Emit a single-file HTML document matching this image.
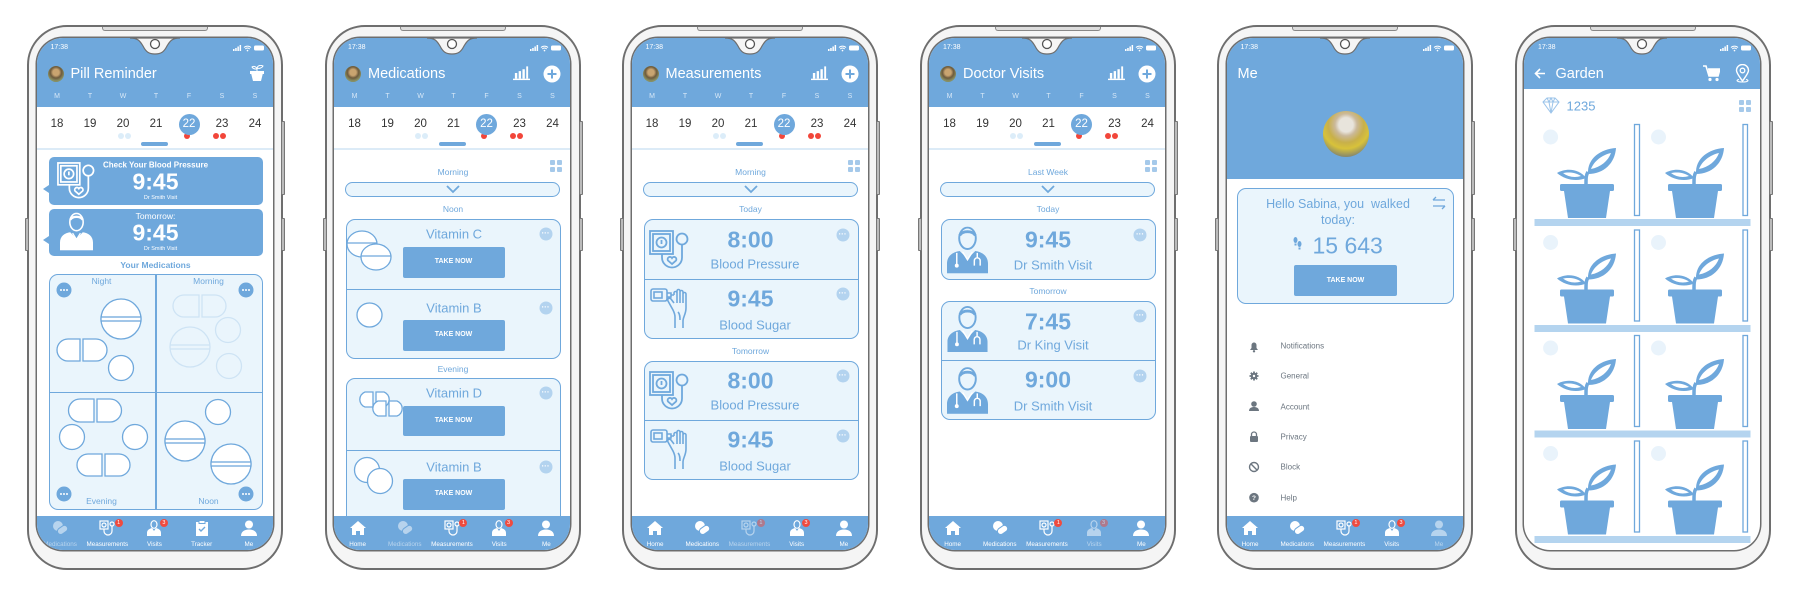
<!DOCTYPE html>
<html><head><meta charset="utf-8">
<style>
*{margin:0;padding:0;box-sizing:border-box}
body{width:1800px;height:599px;background:#fff;position:relative;overflow:hidden;font-family:"Liberation Sans",sans-serif}
.ph{position:absolute;top:25px;width:256px;height:545px}
.fr{position:absolute;left:0;top:0;width:256px;height:545px;border:2px solid #6e6e6e;border-radius:40px;background:#f5f5f5}
.spk{position:absolute;left:75px;top:2px;width:106px;height:4px;border:1px solid #888;border-top:none;border-radius:0 0 3px 3px;background:#ddd}
.sb{position:absolute;width:4px;background:#bbb;border:1px solid #777;border-radius:1px}
.sc{position:absolute;left:9.5px;top:13px;width:236px;height:512px;border-radius:26px;overflow:hidden;background:#fff;box-shadow:0 0 0 1.5px #6e6e6e}
.hd{position:absolute;left:0;top:0;width:236px;height:69px;background:#6fa8dc}
.a{position:absolute;white-space:nowrap}
.c{position:absolute;white-space:nowrap;transform:translate(-50%,-50%)}
.l{position:absolute;white-space:nowrap;transform:translateY(-50%)}
.st{left:14px;top:6px;font-size:7px;color:#fff}
.ttl{left:34px;top:35.5px;font-size:14.5px;color:#fff}
.av{position:absolute;left:11px;top:27.5px;width:16px;height:16px;border-radius:50%;background:radial-gradient(circle at 50% 40%,#c9a470 0 25%,#6d5a3c 45%,#8b9466 70%,#556040)}
.row{position:absolute;left:4px;width:231px;display:flex}
.row span{width:33px;text-align:center;display:block}
.wk{top:55px;font-size:7px;color:#d6e7f7}
.dn{top:79px;font-size:11.5px;color:#333;line-height:14px}
.sel{position:relative;color:#fff}
.sel:before{content:"";position:absolute;left:50%;top:50%;width:21px;height:21px;margin:-10.5px 0 0 -10.5px;border-radius:50%;background:#6fa8dc;z-index:-1}
.dr{position:absolute;left:0;top:69px;width:236px;height:42px;z-index:1}
.dt{position:absolute;top:95px;width:6px;height:6px;border-radius:50%}
.ind{position:absolute;left:104.5px;top:104px;width:27px;height:4px;border-radius:2px;background:#6fa8dc}
.sep{position:absolute;left:0;top:110px;width:236px;height:2px;background:#dcebf7}
.nav{position:absolute;left:0;top:478px;width:236px;height:34px;background:#6fa8dc;display:flex}
.nav div{width:47.2px;position:relative;color:#fff}
.nav svg{position:absolute;left:50%;top:4px;transform:translateX(-50%)}
.nav b{position:absolute;left:0;width:100%;text-align:center;top:25px;font-size:6.3px;font-weight:normal;white-space:nowrap}
.nav .f{opacity:.5}
.bd{position:absolute;top:3px;width:8px;height:8px;border-radius:50%;background:#ef4b3f;color:#fff;font-size:5.5px;text-align:center;line-height:8px}
.grp{position:absolute;left:12px;width:215px;border:1.5px solid #6fa8dc;border-radius:9px;background:#eaf5fc}
.dv{position:absolute;left:0;width:100%;height:1.5px;background:#6fa8dc}
.btn{position:absolute;left:68.5px;width:102px;height:30.5px;background:#6fa8dc;border-radius:2px;color:#fff;font-size:7px;font-weight:bold;text-align:center;line-height:30.5px}
.more{position:absolute;width:13px;height:13px;border-radius:50%;background:#b3d3ef;transform:translate(-50%,-50%)}
.more:after{content:"···";position:absolute;left:0;width:100%;top:0;text-align:center;color:#fff;font-size:8px;line-height:11px;font-weight:bold}
.drop{position:absolute;left:11px;top:144px;width:215px;height:15px;border:1.5px solid #6fa8dc;border-radius:8px;background:#eaf5fc}
.sm{font-size:8.5px;color:#6fa8dc}
.big{font-size:23px;font-weight:bold;color:#6fa8dc}
.med{font-size:13px;color:#6fa8dc}
.vit{font-size:13px;color:#6fa8dc}
.gi{position:absolute;width:12px;height:12px}
.gi i{position:absolute;width:5px;height:5px;border-radius:1px;background:#a5c9ea}
.menu{font-size:8px;color:#6c7680}
</style></head><body>
<svg width="0" height="0" style="position:absolute">
<defs>
<symbol id="stat" viewBox="0 0 32 8"><g fill="#fff"><rect x="0" y="5" width="1.5" height="2"/><rect x="2.2" y="4" width="1.5" height="3"/><rect x="4.4" y="2.5" width="1.5" height="4.5"/><rect x="6.6" y="1" width="1.5" height="6"/></g><path d="M11 3.5a5 5 0 0 1 7 0M12.3 5a3 3 0 0 1 4.4 0" stroke="#fff" stroke-width="1" fill="none"/><circle cx="14.5" cy="6.6" r=".8" fill="#fff"/><rect x="21" y="1.5" width="10" height="5" rx="1.5" fill="#fff"/></symbol>
<symbol id="chart" viewBox="0 0 18 16"><g fill="#fff"><rect x="2" y="8" width="2.5" height="6"/><rect x="6" y="6" width="2.5" height="8"/><rect x="10" y="4" width="2.5" height="10"/><rect x="14" y="1" width="2" height="13"/><rect x="0" y="14" width="18" height="1.5"/></g></symbol>
<symbol id="plus" viewBox="0 0 18 18"><circle cx="9" cy="9" r="8.5" fill="#fff"/><path d="M9 4.5v9M4.5 9h9" stroke="#6fa8dc" stroke-width="2"/></symbol>
<symbol id="bp" viewBox="0 0 40 42"><g fill="none" stroke="currentColor" stroke-width="1.8"><rect x="1" y="2" width="23" height="23"/><rect x="4" y="5" width="17" height="17"/><circle cx="12.5" cy="13.5" r="5"/><path d="M12.5 11v4"/><circle cx="33" cy="10" r="5.5"/><path d="M33 15.5v13c0 6-5 10-10 10s-10-4-10-10v-3.5"/><path d="M23 35l-4-3.5a2.3 2.3 0 0 1 4-2.5a2.3 2.3 0 0 1 4 2.5z"/></g></symbol>
<symbol id="sugar" viewBox="0 0 42 42"><g fill="none" stroke="currentColor" stroke-width="1.6"><rect x="1" y="2" width="16" height="12" rx="2"/><rect x="4" y="5" width="8" height="6"/><path d="M17 6h4v4h-4M21 8h3"/><path d="M24 8v-2a1.5 1.5 0 0 1 3 0v10M27 6v-2a1.5 1.5 0 0 1 3 0v12M30 5a1.5 1.5 0 0 1 3 0v11M33 7a1.5 1.5 0 0 1 3 0v14c0 6-3 9-3 13v7M24 16l-3-4c-2-2-4 0-3 2l5 9c1 2 2 4 2 7v11"/><path d="M28 25c2 2 2 5 2 8"/></g></symbol>
<symbol id="doc" viewBox="0 0 42 48"><ellipse cx="21" cy="12" rx="8.5" ry="11" fill="none" stroke="currentColor" stroke-width="2"/><path d="M13 9c3-5 13-5 16 0" stroke="currentColor" stroke-width="3" fill="none"/><path d="M0 48v-10c0-8 6-12 13-13l8 8 8-8c7 1 13 5 13 13v10z" fill="currentColor"/><path d="M16 26l5 8 5-8" stroke="#fff" stroke-width="1.5" fill="none"/><path d="M10 27v12" stroke="#fff" stroke-width="1.5"/><circle cx="10" cy="40" r="2" fill="#fff"/><path d="M31 27v5m-3 8v-5a3 3 0 0 1 6 0v5" stroke="#fff" stroke-width="1.5" fill="none"/></symbol>
<symbol id="plant" viewBox="0 0 60 72"><rect x="3" y="37" width="54" height="7" rx="1.5" fill="#6fa8dc"/><path d="M7 44h46l-4 27H11z" fill="#6fa8dc"/><path d="M29 37c0-6 0-9 2-12" stroke="#6fa8dc" stroke-width="3.5" fill="none"/><path d="M31 27C30 11 44 2 59 1C58 16 47 27 31 27Z" fill="#6fa8dc"/><path d="M34 22C37 14 45 8 54 6C51 14 44 20 34 22Z" fill="#fff"/><path d="M29 31C22 21 8 21 0 26C8 33 20 35 29 31Z" fill="#6fa8dc"/><path d="M24 29C18 25 11 25 6 26C11 30 18 31 24 29Z" fill="#fff"/></symbol>
<symbol id="home" viewBox="0 0 16 16"><path d="M8 1L0 8h2v7h4v-4h4v4h4V8h2z" fill="#fff"/></symbol>
<symbol id="pills" viewBox="0 0 16 16"><circle cx="6" cy="6" r="5" fill="#fff"/><rect x="5" y="7" width="11" height="6.5" rx="3.2" transform="rotate(-35 10 10)" fill="#fff" stroke="#6fa8dc" stroke-width="1"/></symbol>
<symbol id="meas" viewBox="0 0 16 16"><g fill="none" stroke="#fff" stroke-width="1.2"><rect x="1" y="1" width="8" height="8"/><circle cx="5" cy="5" r="2"/><circle cx="13" cy="4" r="2"/><path d="M13 6v5a4 4 0 0 1-8 0v-2"/></g></symbol>
<symbol id="visit" viewBox="0 0 16 16"><ellipse cx="8" cy="4.5" rx="3" ry="3.8" fill="none" stroke="#fff" stroke-width="1.2"/><path d="M1 16v-3c0-3 2-4 5-5l2 3 2-3c3 1 5 2 5 5v3z" fill="#fff"/></symbol>
<symbol id="track" viewBox="0 0 16 16"><rect x="2" y="2" width="12" height="14" fill="#fff"/><rect x="5" y="0.5" width="6" height="3" fill="#fff" stroke="#6fa8dc"/><path d="M5 9l2 2 4-4" stroke="#6fa8dc" stroke-width="1.4" fill="none"/></symbol>
<symbol id="me" viewBox="0 0 16 16"><circle cx="8" cy="4.5" r="4" fill="#fff"/><path d="M0 16c0-4 3-6.5 8-6.5s8 2.5 8 6.5z" fill="#fff"/></symbol>
</defs></svg>

<!-- ========== PHONE 1 ========== -->
<div class="ph" style="left:27px">
<div class="fr"></div><div class="spk"></div>
<div class="sb" style="left:254px;top:96px;height:74px"></div><div class="sb" style="left:254px;top:193px;height:33px"></div><div class="sb" style="left:-2px;top:193px;height:33px"></div>
<div class="sc">
<div class="hd"></div>
<svg style="position:absolute;left:93px;top:0" width="50" height="18"><path d="M0 0C8 0 10 3 13 8C16 14 19 16 25 16C31 16 34 14 37 8C40 3 42 0 50 0Z" fill="#f5f5f5" stroke="#6e6e6e" stroke-width="1.2"/><circle cx="25" cy="6" r="4.5" fill="#fff" stroke="#555" stroke-width="1.3"/></svg>
<div class="a st">17:38</div><svg style="position:absolute;left:196px;top:6px" width="32" height="8"><use href="#stat"/></svg>
<div class="av"></div><div class="l ttl">Pill Reminder</div>
<svg style="position:absolute;left:212px;top:27px" width="16" height="16" viewBox="0 0 16 16"><path d="M2 8h12l-2 8H4z" fill="#fff"/><rect x="1" y="6" width="14" height="3" fill="#fff"/><path d="M8 6V3M8 4C7 1 4 1 3 2C4 4 6 4 8 4M8 3C9 0 12 0 14 1C13 3 10 4 8 3" stroke="#fff" fill="none" stroke-width="1"/></svg>
<div class="row wk"><span>M</span><span>T</span><span>W</span><span>T</span><span>F</span><span>S</span><span>S</span></div>
<div class="dr"></div>
<div class="row dn" style="z-index:2"><span>18</span><span>19</span><span>20</span><span>21</span><span class="sel">22</span><span>23</span><span>24</span></div>
<div class="dt" style="left:81px;background:#dcedf9"></div><div class="dt" style="left:88px;background:#dcedf9"></div>
<div class="dt" style="left:147px;background:#f2463a"></div>
<div class="dt" style="left:176px;background:#f2463a"></div><div class="dt" style="left:183px;background:#f2463a"></div>
<div class="ind"></div><div class="sep"></div>

<div class="a" style="left:12px;top:119px;width:214px;height:48px;background:#6fa8dc;border-radius:5px"></div>
<div class="a" style="left:6px;top:147px;width:0;height:0;border-top:4px solid transparent;border-bottom:4px solid transparent;border-right:6px solid #6fa8dc"></div>
<svg style="position:absolute;left:20px;top:123px;color:#fff" width="38" height="40"><use href="#bp"/></svg>
<div class="c" style="left:119px;top:126.5px;font-size:8px;font-weight:bold;color:#fff">Check Your Blood Pressure</div>
<div class="c" style="left:119px;top:144px;font-size:23px;font-weight:bold;color:#fff">9:45</div>
<div class="c" style="left:124px;top:160px;font-size:5.5px;color:#fff">Dr Smith Visit</div>

<div class="a" style="left:12px;top:170.5px;width:214px;height:47px;background:#6fa8dc;border-radius:5px"></div>
<div class="a" style="left:6px;top:198px;width:0;height:0;border-top:4px solid transparent;border-bottom:4px solid transparent;border-right:6px solid #6fa8dc"></div>
<svg style="position:absolute;left:23px;top:174px;color:#fff" width="33" height="39" viewBox="0 0 42 48"><use href="#doc"/></svg>
<div class="c" style="left:119px;top:178px;font-size:8.5px;color:#fff">Tomorrow:</div>
<div class="c" style="left:119px;top:195px;font-size:23px;font-weight:bold;color:#fff">9:45</div>
<div class="c" style="left:124px;top:211px;font-size:5.5px;color:#fff">Dr Smith Visit</div>

<div class="c" style="left:119px;top:227px;font-size:8.5px;font-weight:bold;color:#6fa8dc">Your Medications</div>
<div class="a" style="left:12px;top:236px;width:214px;height:236px;border:1.5px solid #6fa8dc;border-radius:9px;background:#eaf5fc"></div>
<div class="a" style="left:118.5px;top:236px;width:1.5px;height:236px;background:#6fa8dc"></div>
<div class="a" style="left:12px;top:353.5px;width:214px;height:1.5px;background:#6fa8dc"></div>
<div class="c sm" style="left:65px;top:243px">Night</div>
<div class="c sm" style="left:172px;top:243px">Morning</div>
<div class="c sm" style="left:65px;top:463px">Evening</div>
<div class="c sm" style="left:172px;top:463px">Noon</div>
<svg style="position:absolute;left:0;top:0" width="236" height="512">
<g fill="#6fa8dc"><circle cx="27" cy="252" r="7.5"/><circle cx="209" cy="252" r="7.5"/><circle cx="27" cy="456" r="7.5"/><circle cx="209" cy="456" r="7.5"/></g>
<g fill="#fff"><circle cx="24" cy="252" r="1"/><circle cx="27" cy="252" r="1"/><circle cx="30" cy="252" r="1"/><circle cx="206" cy="252" r="1"/><circle cx="209" cy="252" r="1"/><circle cx="212" cy="252" r="1"/><circle cx="24" cy="456" r="1"/><circle cx="27" cy="456" r="1"/><circle cx="30" cy="456" r="1"/><circle cx="206" cy="456" r="1"/><circle cx="209" cy="456" r="1"/><circle cx="212" cy="456" r="1"/></g>
<g fill="#fff" stroke="#6fa8dc" stroke-width="1.3">
<ellipse cx="84" cy="281" rx="20" ry="20"/><rect x="64" y="279" width="40" height="4"/>
<path d="M43 301H31a11 11 0 0 0 0 22H43z"/><path d="M46 301H59a11 11 0 0 1 0 22H46z"/>
<circle cx="84" cy="330" r="12.5"/>
<path d="M57 361H43a11 11 0 0 0 0 23H57z"/><path d="M60 361H73a11 11 0 0 1 0 23H60z"/>
<circle cx="35" cy="399" r="12.5"/><circle cx="98" cy="399" r="12.5"/>
<path d="M65 416H51a11 11 0 0 0 0 22H65z"/><path d="M68 416H82a11 11 0 0 1 0 22H68z"/>
<circle cx="181" cy="374" r="12.5"/>
<ellipse cx="148" cy="403" rx="20" ry="20"/><rect x="128" y="401" width="40" height="4"/>
<ellipse cx="194" cy="426" rx="20" ry="20"/><rect x="174" y="424" width="40" height="4"/>
</g>
<g fill="none" stroke="#6fa8dc" stroke-width="1.3" opacity=".22">
<path d="M162 257H147a11 11 0 0 0 0 22H162z"/><path d="M165 257H178a11 11 0 0 1 0 22H165z"/>
<circle cx="153" cy="309" r="20"/><path d="M133 307h40M133 311h40"/>
<circle cx="191" cy="292" r="12.5"/><circle cx="192" cy="328" r="12.5"/>
</g></svg>

<div class="nav">
<div class="f"><svg width="16" height="16"><use href="#pills"/></svg><b>Medications</b></div>
<div><svg width="16" height="16"><use href="#meas"/></svg><span class="bd" style="left:31px">1</span><b>Measurements</b></div>
<div><svg width="16" height="16"><use href="#visit"/></svg><span class="bd" style="left:29px">3</span><b>Visits</b></div>
<div><svg width="16" height="16"><use href="#track"/></svg><b>Tracker</b></div>
<div><svg width="16" height="16"><use href="#me"/></svg><b>Me</b></div>
</div>
</div></div>

<!-- ========== PHONE 2 ========== -->
<div class="ph" style="left:324.5px">
<div class="fr"></div><div class="spk"></div>
<div class="sb" style="left:254px;top:96px;height:74px"></div><div class="sb" style="left:254px;top:193px;height:33px"></div><div class="sb" style="left:-2px;top:193px;height:33px"></div>
<div class="sc">
<div class="hd"></div>
<svg style="position:absolute;left:93px;top:0" width="50" height="18"><path d="M0 0C8 0 10 3 13 8C16 14 19 16 25 16C31 16 34 14 37 8C40 3 42 0 50 0Z" fill="#f5f5f5" stroke="#6e6e6e" stroke-width="1.2"/><circle cx="25" cy="6" r="4.5" fill="#fff" stroke="#555" stroke-width="1.3"/></svg>
<div class="a st">17:38</div><svg style="position:absolute;left:196px;top:6px" width="32" height="8"><use href="#stat"/></svg>
<div class="av"></div><div class="l ttl">Medications</div>
<svg style="position:absolute;left:179px;top:27px" width="17" height="16"><use href="#chart"/></svg>
<svg style="position:absolute;left:209px;top:26.5px" width="18" height="18"><use href="#plus"/></svg>
<div class="row wk"><span>M</span><span>T</span><span>W</span><span>T</span><span>F</span><span>S</span><span>S</span></div>
<div class="dr"></div>
<div class="row dn" style="z-index:2"><span>18</span><span>19</span><span>20</span><span>21</span><span class="sel">22</span><span>23</span><span>24</span></div>
<div class="dt" style="left:81px;background:#dcedf9"></div><div class="dt" style="left:88px;background:#dcedf9"></div>
<div class="dt" style="left:147px;background:#f2463a"></div>
<div class="dt" style="left:176px;background:#f2463a"></div><div class="dt" style="left:183px;background:#f2463a"></div>
<div class="ind"></div><div class="sep"></div>
<div class="gi" style="left:216px;top:122px"><i style="left:0;top:0"></i><i style="left:7px;top:0"></i><i style="left:0;top:7px"></i><i style="left:7px;top:7px"></i></div>
<div class="c sm" style="left:119px;top:134px">Morning</div>
<div class="drop"></div>
<svg style="position:absolute;left:112px;top:147px" width="14" height="9"><path d="M1 1l6 6 6-6" stroke="#6fa8dc" stroke-width="1.8" fill="none"/></svg>
<div class="c sm" style="left:119px;top:171px">Noon</div>
<div class="grp" style="top:181px;height:140px"><div class="dv" style="top:68.5px"></div></div>
<div class="c vit" style="left:120px;top:196px">Vitamin C</div>
<div class="btn" style="top:209px">TAKE NOW</div>
<div class="c vit" style="left:120px;top:269.5px">Vitamin B</div>
<div class="btn" style="top:282px">TAKE NOW</div>
<div class="more" style="left:211.5px;top:196px"></div><div class="more" style="left:211.5px;top:269.5px"></div>
<div class="c sm" style="left:119px;top:330.5px">Evening</div>
<div class="grp" style="top:340px;height:185px"><div class="dv" style="top:70.5px"></div></div>
<div class="c vit" style="left:120px;top:355px">Vitamin D</div>
<div class="btn" style="top:367.5px">TAKE NOW</div>
<div class="c vit" style="left:120px;top:429px">Vitamin B</div>
<div class="btn" style="top:441px">TAKE NOW</div>
<div class="more" style="left:211.5px;top:355px"></div><div class="more" style="left:211.5px;top:429px"></div>
<svg style="position:absolute;left:0;top:0" width="236" height="512"><g fill="#fff" stroke="#6fa8dc" stroke-width="1.3">
<ellipse cx="28" cy="206" rx="15" ry="13"/><path d="M13 205h30"/>
<ellipse cx="42" cy="219" rx="15" ry="13"/><path d="M27 218h30"/>
<ellipse cx="35.5" cy="277" rx="12.5" ry="12"/>
<path d="M39 354H31a8 8 0 0 0 0 15H39zM42 354H50a8 8 0 0 1 0 15H42z"/>
<path d="M52 363H44a8 8 0 0 0 0 15H52zM55 363H63a8 8 0 0 1 0 15H55z"/>
<circle cx="33" cy="432" r="12.5"/><circle cx="46" cy="443" r="12.5"/>
</g></svg>
<div class="nav">
<div><svg width="16" height="16"><use href="#home"/></svg><b>Home</b></div>
<div class="f"><svg width="16" height="16"><use href="#pills"/></svg><b>Medications</b></div>
<div><svg width="16" height="16"><use href="#meas"/></svg><span class="bd" style="left:31px">1</span><b>Measurements</b></div>
<div><svg width="16" height="16"><use href="#visit"/></svg><span class="bd" style="left:29px">3</span><b>Visits</b></div>
<div><svg width="16" height="16"><use href="#me"/></svg><b>Me</b></div>
</div>
</div></div>

<!-- ========== PHONE 3 ========== -->
<div class="ph" style="left:622px">
<div class="fr"></div><div class="spk"></div>
<div class="sb" style="left:254px;top:96px;height:74px"></div><div class="sb" style="left:254px;top:193px;height:33px"></div><div class="sb" style="left:-2px;top:193px;height:33px"></div>
<div class="sc">
<div class="hd"></div>
<svg style="position:absolute;left:93px;top:0" width="50" height="18"><path d="M0 0C8 0 10 3 13 8C16 14 19 16 25 16C31 16 34 14 37 8C40 3 42 0 50 0Z" fill="#f5f5f5" stroke="#6e6e6e" stroke-width="1.2"/><circle cx="25" cy="6" r="4.5" fill="#fff" stroke="#555" stroke-width="1.3"/></svg>
<div class="a st">17:38</div><svg style="position:absolute;left:196px;top:6px" width="32" height="8"><use href="#stat"/></svg>
<div class="av"></div><div class="l ttl">Measurements</div>
<svg style="position:absolute;left:179px;top:27px" width="17" height="16"><use href="#chart"/></svg>
<svg style="position:absolute;left:209px;top:26.5px" width="18" height="18"><use href="#plus"/></svg>
<div class="row wk"><span>M</span><span>T</span><span>W</span><span>T</span><span>F</span><span>S</span><span>S</span></div>
<div class="dr"></div>
<div class="row dn" style="z-index:2"><span>18</span><span>19</span><span>20</span><span>21</span><span class="sel">22</span><span>23</span><span>24</span></div>
<div class="dt" style="left:81px;background:#dcedf9"></div><div class="dt" style="left:88px;background:#dcedf9"></div>
<div class="dt" style="left:147px;background:#f2463a"></div>
<div class="dt" style="left:176px;background:#f2463a"></div><div class="dt" style="left:183px;background:#f2463a"></div>
<div class="ind"></div><div class="sep"></div>
<div class="gi" style="left:216px;top:122px"><i style="left:0;top:0"></i><i style="left:7px;top:0"></i><i style="left:0;top:7px"></i><i style="left:7px;top:7px"></i></div>
<div class="c sm" style="left:119px;top:134px">Morning</div>
<div class="drop"></div>
<svg style="position:absolute;left:112px;top:147px" width="14" height="9"><path d="M1 1l6 6 6-6" stroke="#6fa8dc" stroke-width="1.8" fill="none"/></svg>
<div class="c sm" style="left:119px;top:171px">Today</div>
<div class="grp" style="top:181px;height:120px"><div class="dv" style="top:58.5px"></div></div>
<div class="c big" style="left:119px;top:202px">8:00</div>
<div class="c med" style="left:123.5px;top:226px">Blood Pressure</div>
<div class="c big" style="left:119px;top:261px">9:45</div>
<div class="c med" style="left:123.5px;top:287px">Blood Sugar</div>
<svg style="position:absolute;left:17px;top:191px;color:#6fa8dc" width="40" height="42"><use href="#bp"/></svg>
<svg style="position:absolute;left:18px;top:249px;color:#6fa8dc" width="42" height="42"><use href="#sugar"/></svg>
<div class="more" style="left:211px;top:197px"></div><div class="more" style="left:211px;top:256px"></div>
<div class="c sm" style="left:119px;top:312.5px">Tomorrow</div>
<div class="grp" style="top:322.5px;height:119px"><div class="dv" style="top:58px"></div></div>
<div class="c big" style="left:119px;top:343px">8:00</div>
<div class="c med" style="left:123.5px;top:367px">Blood Pressure</div>
<div class="c big" style="left:119px;top:402px">9:45</div>
<div class="c med" style="left:123.5px;top:428px">Blood Sugar</div>
<svg style="position:absolute;left:17px;top:332px;color:#6fa8dc" width="40" height="42"><use href="#bp"/></svg>
<svg style="position:absolute;left:18px;top:390px;color:#6fa8dc" width="42" height="42"><use href="#sugar"/></svg>
<div class="more" style="left:211px;top:338px"></div><div class="more" style="left:211px;top:397.5px"></div>
<div class="nav">
<div><svg width="16" height="16"><use href="#home"/></svg><b>Home</b></div>
<div><svg width="16" height="16"><use href="#pills"/></svg><b>Medications</b></div>
<div class="f"><svg width="16" height="16"><use href="#meas"/></svg><span class="bd" style="left:31px">1</span><b>Measurements</b></div>
<div><svg width="16" height="16"><use href="#visit"/></svg><span class="bd" style="left:29px">3</span><b>Visits</b></div>
<div><svg width="16" height="16"><use href="#me"/></svg><b>Me</b></div>
</div>
</div></div>

<!-- ========== PHONE 4 ========== -->
<div class="ph" style="left:919.5px">
<div class="fr"></div><div class="spk"></div>
<div class="sb" style="left:254px;top:96px;height:74px"></div><div class="sb" style="left:254px;top:193px;height:33px"></div><div class="sb" style="left:-2px;top:193px;height:33px"></div>
<div class="sc">
<div class="hd"></div>
<svg style="position:absolute;left:93px;top:0" width="50" height="18"><path d="M0 0C8 0 10 3 13 8C16 14 19 16 25 16C31 16 34 14 37 8C40 3 42 0 50 0Z" fill="#f5f5f5" stroke="#6e6e6e" stroke-width="1.2"/><circle cx="25" cy="6" r="4.5" fill="#fff" stroke="#555" stroke-width="1.3"/></svg>
<div class="a st">17:38</div><svg style="position:absolute;left:196px;top:6px" width="32" height="8"><use href="#stat"/></svg>
<div class="av"></div><div class="l ttl">Doctor Visits</div>
<svg style="position:absolute;left:179px;top:27px" width="17" height="16"><use href="#chart"/></svg>
<svg style="position:absolute;left:209px;top:26.5px" width="18" height="18"><use href="#plus"/></svg>
<div class="row wk"><span>M</span><span>T</span><span>W</span><span>T</span><span>F</span><span>S</span><span>S</span></div>
<div class="dr"></div>
<div class="row dn" style="z-index:2"><span>18</span><span>19</span><span>20</span><span>21</span><span class="sel">22</span><span>23</span><span>24</span></div>
<div class="dt" style="left:81px;background:#dcedf9"></div><div class="dt" style="left:88px;background:#dcedf9"></div>
<div class="dt" style="left:147px;background:#f2463a"></div>
<div class="dt" style="left:176px;background:#f2463a"></div><div class="dt" style="left:183px;background:#f2463a"></div>
<div class="ind"></div><div class="sep"></div>
<div class="gi" style="left:216px;top:122px"><i style="left:0;top:0"></i><i style="left:7px;top:0"></i><i style="left:0;top:7px"></i><i style="left:7px;top:7px"></i></div>
<div class="c sm" style="left:119px;top:134px">Last Week</div>
<div class="drop"></div>
<svg style="position:absolute;left:112px;top:147px" width="14" height="9"><path d="M1 1l6 6 6-6" stroke="#6fa8dc" stroke-width="1.8" fill="none"/></svg>
<div class="c sm" style="left:119px;top:171px">Today</div>
<div class="grp" style="top:181px;height:60.5px"></div>
<div class="c big" style="left:119px;top:202px">9:45</div>
<div class="c med" style="left:124px;top:227px">Dr Smith Visit</div>
<svg style="position:absolute;left:18px;top:188px;color:#6fa8dc" width="41" height="48" viewBox="0 0 42 48"><use href="#doc"/></svg>
<div class="more" style="left:211px;top:197px"></div>
<div class="c sm" style="left:119px;top:253px">Tomorrow</div>
<div class="grp" style="top:262.5px;height:119.5px"><div class="dv" style="top:58px"></div></div>
<div class="c big" style="left:119px;top:283.5px">7:45</div>
<div class="c med" style="left:124px;top:307px">Dr King Visit</div>
<div class="c big" style="left:119px;top:342px">9:00</div>
<div class="c med" style="left:124px;top:367.5px">Dr Smith Visit</div>
<svg style="position:absolute;left:18px;top:268px;color:#6fa8dc" width="41" height="46" viewBox="0 0 42 48"><use href="#doc"/></svg>
<svg style="position:absolute;left:18px;top:329px;color:#6fa8dc" width="41" height="47" viewBox="0 0 42 48"><use href="#doc"/></svg>
<div class="more" style="left:211px;top:278px"></div><div class="more" style="left:211px;top:337.5px"></div>
<div class="nav">
<div><svg width="16" height="16"><use href="#home"/></svg><b>Home</b></div>
<div><svg width="16" height="16"><use href="#pills"/></svg><b>Medications</b></div>
<div><svg width="16" height="16"><use href="#meas"/></svg><span class="bd" style="left:31px">1</span><b>Measurements</b></div>
<div class="f"><svg width="16" height="16"><use href="#visit"/></svg><span class="bd" style="left:29px">3</span><b>Visits</b></div>
<div><svg width="16" height="16"><use href="#me"/></svg><b>Me</b></div>
</div>
</div></div>

<!-- ========== PHONE 5 ========== -->
<div class="ph" style="left:1217px">
<div class="fr"></div><div class="spk"></div>
<div class="sb" style="left:254px;top:96px;height:74px"></div><div class="sb" style="left:254px;top:193px;height:33px"></div><div class="sb" style="left:-2px;top:193px;height:33px"></div>
<div class="sc">
<div class="hd" style="height:140.5px"></div>
<svg style="position:absolute;left:93px;top:0" width="50" height="18"><path d="M0 0C8 0 10 3 13 8C16 14 19 16 25 16C31 16 34 14 37 8C40 3 42 0 50 0Z" fill="#f5f5f5" stroke="#6e6e6e" stroke-width="1.2"/><circle cx="25" cy="6" r="4.5" fill="#fff" stroke="#555" stroke-width="1.3"/></svg>
<div class="a st">17:38</div><svg style="position:absolute;left:196px;top:6px" width="32" height="8"><use href="#stat"/></svg>
<div class="l ttl" style="left:11px">Me</div>
<div class="a" style="left:96px;top:73px;width:46px;height:46px;border-radius:50%;background:radial-gradient(circle at 50% 30%,#e8e4dc 0 18%,#cbb99a 28%,#c8b04a 45%,#d8c23a 60%,#8a8a6a 80%,#5e6a70)"></div>
<div class="a" style="left:10.5px;top:149.5px;width:216.5px;height:116px;border:1.5px solid #6fa8dc;border-radius:9px;background:#eaf5fc"></div>
<div class="c" style="left:111.5px;top:165.5px;font-size:12.5px;color:#6fa8dc">Hello Sabina, you&nbsp; walked</div>
<div class="c" style="left:111.5px;top:181.5px;font-size:12.5px;color:#6fa8dc">today:</div>
<svg style="position:absolute;left:205px;top:158px" width="14" height="14" viewBox="0 0 14 14"><path d="M1 4h12M1 4l3-3M13 10H1M13 10l-3 3" stroke="#6fa8dc" stroke-width="1.3" fill="none"/></svg>
<svg style="position:absolute;left:66px;top:199px" width="9" height="13" viewBox="0 0 9 13"><ellipse cx="2.5" cy="3" rx="2" ry="3" fill="#6fa8dc"/><ellipse cx="6.5" cy="7" rx="2" ry="3" fill="#6fa8dc"/><rect x="1.5" y="6.5" width="2" height="2" fill="#6fa8dc"/><rect x="5.5" y="10.5" width="2" height="2" fill="#6fa8dc"/></svg>
<div class="l" style="left:86px;top:207.5px;font-size:23px;color:#6fa8dc">15 643</div>
<div class="btn" style="left:67.5px;top:227px;width:103px;height:31px;line-height:31px">TAKE NOW</div>
<svg style="position:absolute;left:0;top:0" width="60" height="512" fill="#6c7680">
<path d="M23 312h8l-1.5-2v-3a2.5 2.5 0 0 0-5 0v3z"/><circle cx="27" cy="313.3" r="1.2"/>
<circle cx="27" cy="338" r="3.3"/><path d="M27 333.5v9M22.5 338h9M23.8 334.8l6.4 6.4M30.2 334.8l-6.4 6.4" stroke="#6c7680" stroke-width="1.8"/><circle cx="27" cy="338" r="1.2" fill="#fff"/>
<circle cx="27" cy="366" r="2.8"/><path d="M22 373c0-3 2.5-4 5-4s5 1 5 4z"/>
<rect x="23" y="398" width="8" height="6" rx="1"/><path d="M24.5 398v-1.5a2.5 2.5 0 0 1 5 0V398" stroke="#6c7680" stroke-width="1.3" fill="none"/>
<circle cx="27" cy="429" r="4.5" fill="none" stroke="#6c7680" stroke-width="1.4"/><path d="M23.8 425.8l6.4 6.4" stroke="#6c7680" stroke-width="1.4"/>
<circle cx="27" cy="459.7" r="4.8"/><text x="27" y="462" font-size="6.5" fill="#fff" text-anchor="middle" font-family="Liberation Sans" font-weight="bold">?</text>
</svg>
<div class="l menu" style="left:54px;top:307.7px">Notifications</div>
<div class="l menu" style="left:54px;top:338px">General</div>
<div class="l menu" style="left:54px;top:368.7px">Account</div>
<div class="l menu" style="left:54px;top:399px">Privacy</div>
<div class="l menu" style="left:54px;top:429px">Block</div>
<div class="l menu" style="left:54px;top:459.7px">Help</div>
<div class="nav">
<div><svg width="16" height="16"><use href="#home"/></svg><b>Home</b></div>
<div><svg width="16" height="16"><use href="#pills"/></svg><b>Medications</b></div>
<div><svg width="16" height="16"><use href="#meas"/></svg><span class="bd" style="left:31px">1</span><b>Measurements</b></div>
<div><svg width="16" height="16"><use href="#visit"/></svg><span class="bd" style="left:29px">3</span><b>Visits</b></div>
<div class="f"><svg width="16" height="16"><use href="#me"/></svg><b>Me</b></div>
</div>
</div></div>

<!-- ========== PHONE 6 ========== -->
<div class="ph" style="left:1514.5px">
<div class="fr"></div><div class="spk"></div>
<div class="sb" style="left:254px;top:96px;height:74px"></div><div class="sb" style="left:254px;top:193px;height:33px"></div><div class="sb" style="left:-2px;top:193px;height:33px"></div>
<div class="sc">
<div class="hd" style="height:51px"></div>
<svg style="position:absolute;left:93px;top:0" width="50" height="18"><path d="M0 0C8 0 10 3 13 8C16 14 19 16 25 16C31 16 34 14 37 8C40 3 42 0 50 0Z" fill="#f5f5f5" stroke="#6e6e6e" stroke-width="1.2"/><circle cx="25" cy="6" r="4.5" fill="#fff" stroke="#555" stroke-width="1.3"/></svg>
<div class="a st">17:38</div><svg style="position:absolute;left:196px;top:6px" width="32" height="8"><use href="#stat"/></svg>
<svg style="position:absolute;left:10px;top:30px" width="12" height="11"><path d="M11 5.5H1.5M6 1L1.5 5.5 6 10" stroke="#fff" stroke-width="1.6" fill="none"/></svg>
<div class="l ttl" style="left:31.5px">Garden</div>
<svg style="position:absolute;left:179px;top:27px" width="17" height="17" viewBox="0 0 17 17"><path d="M0 1h3l3 10h9l2-7H5" fill="none" stroke="#fff" stroke-width="1.6"/><path d="M5 4h12l-2 7H6z" fill="#fff"/><circle cx="7" cy="14.5" r="1.6" fill="#fff"/><circle cx="14" cy="14.5" r="1.6" fill="#fff"/></svg>
<svg style="position:absolute;left:211px;top:26px" width="15" height="19" viewBox="0 0 15 19"><path d="M7.5 17C4 12 1.5 9 1.5 6.5a6 6 0 0 1 12 0C13.5 9 11 12 7.5 17z" fill="none" stroke="#fff" stroke-width="1.4"/><circle cx="7.5" cy="6.5" r="2.3" fill="none" stroke="#fff" stroke-width="1.3"/><path d="M4 15.5C1 16 1 18 7.5 18S14 16 11 15.5" fill="none" stroke="#fff" stroke-width="1.1"/></svg>
<svg style="position:absolute;left:17.5px;top:59px" width="18" height="17" viewBox="0 0 18 17"><path d="M1 5l4-4h8l4 4-8 11z M1 5h16M5 1l2 4 2 11M13 1l-2 4-2 11M7 5l2-4 2 4" fill="none" stroke="#9cc4ea" stroke-width="1"/></svg>
<div class="l" style="left:42.5px;top:67.5px;font-size:13px;color:#6fa8dc">1235</div>
<div class="gi" style="left:215px;top:61.5px"><i style="left:0;top:0"></i><i style="left:7px;top:0"></i><i style="left:0;top:7px"></i><i style="left:7px;top:7px"></i></div>
<svg style="position:absolute;left:0;top:0" width="236" height="512">
<g fill="#b4d4ef"><rect x="10.5" y="181" width="216" height="7"/><rect x="10.5" y="287" width="216" height="7"/><rect x="10.5" y="392.5" width="216" height="7"/><rect x="10.5" y="498" width="216" height="7"/></g>
<g fill="#fff" stroke="#6fa8dc" stroke-width="1.3">
<rect x="110.5" y="86.5" width="5" height="91"/><rect x="219" y="86.5" width="4.5" height="91"/>
<rect x="110.5" y="192" width="5" height="91"/><rect x="219" y="192" width="4.5" height="91"/>
<rect x="110.5" y="297.5" width="5" height="91"/><rect x="219" y="297.5" width="4.5" height="91"/>
<rect x="110.5" y="403" width="5" height="91"/><rect x="219" y="403" width="4.5" height="91"/>
</g>
<g fill="#e9f3fb"><circle cx="26.6" cy="99" r="7.5"/><circle cx="134.5" cy="99" r="7.5"/><circle cx="26.6" cy="204.5" r="7.5"/><circle cx="134.5" cy="204.5" r="7.5"/><circle cx="26.6" cy="310" r="7.5"/><circle cx="134.5" cy="310" r="7.5"/><circle cx="26.6" cy="415.5" r="7.5"/><circle cx="134.5" cy="415.5" r="7.5"/></g>
<use href="#plant" x="33" y="109" width="60" height="72"/><use href="#plant" x="141" y="109" width="60" height="72"/>
<use href="#plant" x="33" y="214.5" width="60" height="72"/><use href="#plant" x="141" y="214.5" width="60" height="72"/>
<use href="#plant" x="33" y="320" width="60" height="72"/><use href="#plant" x="141" y="320" width="60" height="72"/>
<use href="#plant" x="33" y="425.5" width="60" height="72"/><use href="#plant" x="141" y="425.5" width="60" height="72"/>
</svg>
</div></div>
</body></html>
